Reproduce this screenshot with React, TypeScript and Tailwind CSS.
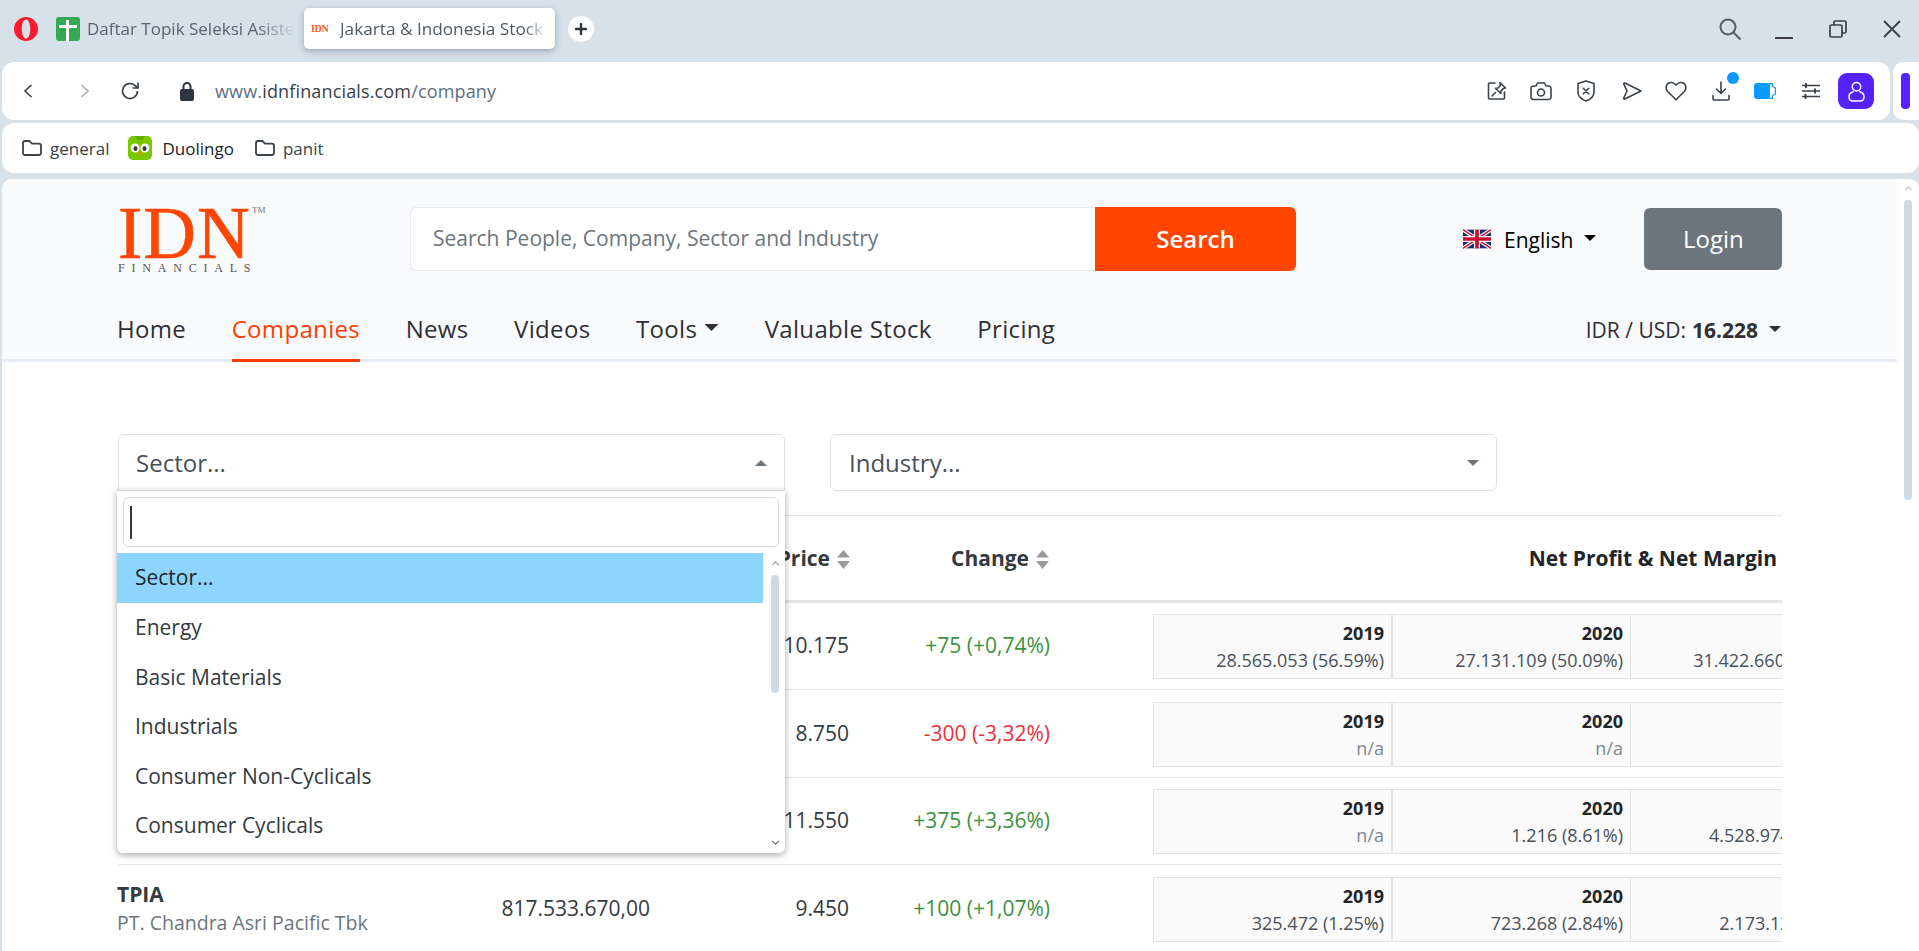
import React from "react";

const Caret = ({ className = "" }: { className?: string }) => (
  <svg viewBox="0 0 12 6" className={className} fill="currentColor"><path d="M0 0h12L6 6z" /></svg>
);

const Sort = () => (
  <svg viewBox="0 0 13 19" className="w-[13px] h-[19px] ml-[7px] shrink-0 text-[#9a9a9a]" fill="currentColor">
    <path d="M6.5 0 13 7.5H0z" /><path d="M0 11h13l-6.5 8z" />
  </svg>
);

const Folder = () => (
  <svg viewBox="0 0 20 16" className="w-[20px] h-[16px] shrink-0" fill="none" stroke="#3b4148" strokeWidth="1.8">
    <path d="M1 3.2C1 1.9 1.900 1 3.200 1h3.600c.7 0 1.200.3 1.600.8L10 3.600h6.800c1.300 0 2.200.9 2.200 2.200v7c0 1.300-.9 2.200-2.200 2.200H3.200C1.900 15 1 14.100 1 12.800z" strokeLinejoin="round" />
  </svg>
);

const Flag = () => (
  <svg viewBox="0 0 60 40" className="w-[28px] h-[20px] shrink-0">
    <rect width="60" height="40" fill="#1a2a6c" />
    <path d="M0 0 60 40M60 0 0 40" stroke="#fff" strokeWidth="8" />
    <path d="M0 0 60 40M60 0 0 40" stroke="#c8102e" strokeWidth="3" />
    <path d="M30 0v40M0 20h60" stroke="#fff" strokeWidth="13" />
    <path d="M30 0v40M0 20h60" stroke="#c8102e" strokeWidth="8" />
  </svg>
);

const tool = "fill-none stroke-[#3a424c] stroke-[1.6]";

const ToolIcons = () => (
  <div className="flex items-center">
    <svg viewBox="0 0 20 20" className={`w-[20px] h-[20px] ${tool}`} strokeLinecap="round" strokeLinejoin="round">
      <path d="M8 2H2.500A1 1 0 0 0 1.500 3v14a1 1 0 0 0 1 1h14a1 1 0 0 0 1-1v-6" />
      <path d="m13 1.500 5.500 5.500-2.200.6-2.300 2.400-.3 2.500-5.200-5.200 2.500-.3L13.300 4.700z" />
      <path d="m8.500 11.500-3.500 3.500" />
    </svg>
    <svg viewBox="0 0 22 20" className={`w-[22px] h-[20px] ml-[23px] ${tool}`} strokeLinejoin="round">
      <path d="M3.500 5H6l1.500-3h7L16 5h2.500A2.500 2.500 0 0 1 21 7.500v8.500a2.500 2.500 0 0 1-2.500 2.500h-15A2.500 2.500 0 0 1 1 16V7.500A2.500 2.500 0 0 1 3.500 5z" />
      <circle cx="11" cy="11.500" r="3.500" />
    </svg>
    <svg viewBox="0 0 18 22" className={`w-[18px] h-[22px] ml-[25px] ${tool}`} strokeLinejoin="round" strokeLinecap="round">
      <path d="M9 1 17 3.500V12c0 4.500-4 7.500-8 9-4-1.500-8-4.500-8-9V3.500z" />
      <path d="m6.300 8.300 5.400 5.400m0-5.400-5.400 5.400" />
    </svg>
    <svg viewBox="0 0 20 18" className={`w-[20px] h-[18px] ml-[27px] ${tool}`} strokeLinejoin="round" strokeLinecap="round">
      <path d="M2 1.200c.2-.3.5-.3.9-.2L19 9 2.800 17c-.7.3-1.300-.3-1-1L5 9 1.800 2.200c-.1-.4 0-.8.2-1z" />
    </svg>
    <svg viewBox="0 0 22 20" className={`w-[22px] h-[20px] ml-[23px] ${tool}`} strokeLinejoin="round">
      <path d="M11 18.700 2.700 10.500C.5 8.200.6 4.700 2.800 2.700c2.300-1.900 5.700-1.500 8.200 1.400 2.500-2.900 5.900-3.300 8.200-1.400 2.200 2 2.300 5.500.1 7.800z" />
    </svg>
    <div className="relative ml-[25px] w-[18px] h-[20px]">
      <svg viewBox="0 0 18 20" className={`w-[18px] h-[20px] ${tool}`} strokeLinecap="round" strokeLinejoin="round">
        <path d="M9 1v11M4.500 8 9 12.500 13.500 8M1 14.500V18a1 1 0 0 0 1 1h14a1 1 0 0 0 1-1v-3.500" />
      </svg>
      <span className="absolute left-[15px] top-[-9px] w-[12px] h-[12px] rounded-full bg-[#0a97ff]" />
    </div>
    <svg viewBox="0 0 22 16" className="w-[22px] h-[16px] ml-[24px]">
      <rect width="16" height="16" rx="3" fill="#0a9bff" />
      <path d="M15 .6h3.400v2.600l3 1.800v6l-3 1.800v2.600H15" fill="none" stroke="#0a9bff" strokeWidth="1.200" strokeLinejoin="round" />
    </svg>
    <svg viewBox="0 0 18 16" className={`w-[18px] h-[16px] ml-[26px] ${tool}`} strokeLinecap="round">
      <path d="M.5 2.500h17M.5 8h17M.5 13.500h17" />
      <path d="M4 .8v3.400M13 6.300v3.400M3.500 11.800v3.400" strokeWidth="2" />
    </svg>
    <div className="ml-[18px] w-[36px] h-[36px] rounded-[9px] bg-[#5522ff] flex items-center justify-center">
      <svg viewBox="0 0 18 22" className="w-[17px] h-[21px] fill-none stroke-white stroke-[1.500]">
        <circle cx="9" cy="6" r="4.500" />
        <path d="M6 11C2.500 12 1 14 1 16.500 1 19.500 3 21 5.500 21h7c2.500 0 4.500-1.500 4.500-4.500 0-2.500-1.500-4.500-5-5.500" />
      </svg>
    </div>
  </div>
);

type Cell = { year: string; value: string; na?: boolean };

const YearCell = ({ c, w, thick }: { c: Cell; w: string; thick?: boolean }) => (
  <div className={`h-[65px] shrink-0 ${w} bg-[#fafafa] border-y-[1px] border-y-[#e2e2e2] border-r-[#e2e2e2] ${thick ? "border-r-[2px]" : "border-r-[1px]"} pr-[7px] pb-[1px] flex flex-col items-end justify-center text-[18px] whitespace-nowrap`}>
    <span className="font-bold text-[#212529] leading-[27px]">{c.year}</span>
    <span className={c.na ? "text-[#7d8791] leading-[26px]" : "text-[#495057] leading-[26px]"}>{c.value}</span>
  </div>
);

const Cells = ({ cells }: { cells: Cell[] }) => (
  <div className="flex w-[629px] shrink-0 overflow-hidden">
    <div className="w-[1px] h-[65px] bg-[#e2e2e2] shrink-0" />
    <YearCell c={cells[0]} w="w-[239px]" thick />
    <YearCell c={cells[1]} w="w-[238px]" />
    <YearCell c={cells[2]} w="w-[238px]" />
  </div>
);

const rows = [
  { price: "10.175", change: "+75 (+0,74%)", tone: "text-[#3d9140]", h: "h-[87px] pt-[11px]", cells: [
    { year: "2019", value: "28.565.053 (56.59%)" }, { year: "2020", value: "27.131.109 (50.09%)" }, { year: "2021", value: "31.422.660 (52.27%)" } ] },
  { price: "8.750", change: "-300 (-3,32%)", tone: "text-[#e8323c]", h: "h-[88px] pt-[12px]", cells: [
    { year: "2019", value: "n/a", na: true }, { year: "2020", value: "n/a", na: true }, { year: "2021", value: "n/a", na: true } ] },
  { price: "11.550", change: "+375 (+3,36%)", tone: "text-[#3d9140]", h: "h-[87px] pt-[11px]", cells: [
    { year: "2019", value: "n/a", na: true }, { year: "2020", value: "1.216 (8.61%)" }, { year: "2021", value: "4.528.974 (8.61%)\u00a0" } ] },
  { price: "9.450", change: "+100 (+1,07%)", tone: "text-[#3d9140]", h: "h-[88px] pt-[12px]", cells: [
    { year: "2019", value: "325.472 (1.25%)" }, { year: "2020", value: "723.268 (2.84%)" }, { year: "2021", value: "2.173.123 (8.5%)\u00a0" } ], ticker: "TPIA", name: "PT. Chandra Asri Pacific Tbk", cap: "817.533.670,00" },
] as { price: string; change: string; tone: string; h: string; cells: Cell[]; ticker?: string; name?: string; cap?: string }[];

const options = ["Energy", "Basic Materials", "Industrials", "Consumer Non-Cyclicals", "Consumer Cyclicals"];

export default function App() {
  return (
    <div className="w-full h-[951px] overflow-hidden bg-[#d7e1ea] flex flex-col font-['Open_Sans',sans-serif]">
      {/* tab strip */}
      <div className="h-[62px] shrink-0 flex pt-[8px] pl-[14px] pr-[18px]">
        <svg viewBox="0 0 24 24" className="w-[24px] h-[24px] mt-[9px] shrink-0">
          <path fillRule="evenodd" fill="#ff1b2d" d="M12 0c6.600 0 12 5.400 12 12s-5.400 12-12 12S0 18.600 0 12 5.400 0 12 0zm0 2.500c-2.700 0-4.200 4.200-4.200 9.500s1.500 9.500 4.200 9.500 4.200-4.200 4.200-9.500S14.700 2.500 12 2.500z" />
        </svg>
        <div className="ml-[18px] mt-[9px] w-[24px] h-[24px] rounded-[3px] bg-[#34a853] relative shrink-0">
          <span className="absolute left-[10px] top-[3px] w-[3px] h-[21px] bg-white" />
          <span className="absolute left-[3px] top-[8px] w-[18px] h-[3px] bg-white" />
        </div>
        <div className="ml-[7px] w-[209px] mt-[7px] h-[28px] leading-[28px] text-[17px] text-[#5a646e] whitespace-nowrap overflow-hidden [mask-image:linear-gradient(to_right,black_82%,transparent)]">Daftar Topik Seleksi Asisten Laboratorium</div>
        <div className="ml-[8px] w-[251px] h-[41px] bg-white rounded-[5px] shadow-[0_2px_6px_rgba(70,90,110,0.45)] flex items-center pl-[7px] shrink-0">
          <span className="w-[22px] text-[10px] font-bold text-[#ff5a30] font-['Liberation_Serif',serif] tracking-[-0.3px] shrink-0">IDN</span>
          <span className="ml-[7px] w-[206px] text-[17.2px] text-[#4f5963] whitespace-nowrap overflow-hidden [mask-image:linear-gradient(to_right,black_90%,transparent)]">Jakarta &amp; Indonesia Stock Exchange</span>
        </div>
        <div className="ml-[13px] mt-[8px] w-[26px] h-[26px] rounded-full bg-white flex items-center justify-center shrink-0">
          <svg viewBox="0 0 12 12" className="w-[12px] h-[12px]"><path d="M6 1v10M1 6h10" stroke="#2c3540" strokeWidth="2.400" strokeLinecap="round" /></svg>
        </div>
        <div className="flex-1" />
        <svg viewBox="0 0 22 22" className="w-[22px] h-[22px] mt-[10px] fill-none stroke-[#555c63] stroke-[2]">
          <circle cx="9" cy="9" r="7.500" /><path d="m14.500 14.500 7 7" />
        </svg>
        <div className="ml-[34px] mt-[29px] w-[18px] h-[2px] bg-[#3b3f44]" />
        <svg viewBox="0 0 18 18" className="ml-[36px] mt-[12px] w-[18px] h-[18px] fill-none stroke-[#3b3f44] stroke-[1.700]">
          <rect x="1" y="5" width="12" height="12" rx="1.500" /><path d="M5 5V2.500C5 1.600 5.600 1 6.500 1h9C16.400 1 17 1.600 17 2.500v9c0 .9-.6 1.500-1.500 1.500H13" />
        </svg>
        <svg viewBox="0 0 18 18" className="ml-[36px] mt-[12px] w-[18px] h-[18px] fill-none stroke-[#3b3f44] stroke-[1.800]">
          <path d="m1 1 16 16M17 1 1 17" />
        </svg>
      </div>

      {/* address bar */}
      <div className="h-[58px] shrink-0 flex mb-[3px]">
        <div className="ml-[2px] w-[1888px] bg-white rounded-[12px] flex items-center pr-[16px]">
          <svg viewBox="0 0 10 14" className="ml-[21px] w-[10px] h-[14px] fill-none stroke-[#3a424c] stroke-[1.700]"><path d="M8.500 1 2 7l6.500 6" /></svg>
          <svg viewBox="0 0 10 14" className="ml-[47px] w-[10px] h-[14px] fill-none stroke-[#aab0b6] stroke-[1.700]"><path d="m1.500 1 6.500 6-6.500 6" /></svg>
          <svg viewBox="0 0 20 20" className="ml-[30px] w-[20px] h-[20px] fill-none stroke-[#3a424c] stroke-[1.700]">
            <path d="M17.500 10a7.500 7.500 0 1 1-2.300-5.400L18 7" /><path d="M18 1.500V7h-5.500" fill="none" />
          </svg>
          <svg viewBox="0 0 14 20" className="ml-[40px] w-[14px] h-[20px]">
            <path d="M3.500 9V5.500a3.500 3.500 0 0 1 7 0V9" fill="none" stroke="#2c3540" strokeWidth="2" />
            <rect x="0" y="8" width="14" height="12" rx="2" fill="#2c3540" />
          </svg>
          <div className="ml-[21px] text-[18px] tracking-[0.15px] text-[#5e6e80] whitespace-nowrap">www.<span className="text-[#3a424c]">idnfinancials.com</span>/company</div>
          <div className="flex-1" />
          <ToolIcons />
        </div>
        <div className="ml-[3px] flex-1 bg-white rounded-l-[10px] flex items-center pl-[8px]">
          <div className="w-[9px] h-[36px] rounded-[4px] bg-[#5522ff]" />
        </div>
      </div>

      {/* bookmarks */}
      <div className="h-[50px] shrink-0 ml-[2px] bg-white rounded-[12px] flex items-center pl-[20px] text-[17px] text-[#3a424c]">
        <Folder />
        <span className="ml-[8px] pt-[2px]">general</span>
        <svg viewBox="0 0 24 24" className="ml-[19px] w-[24px] h-[24px] shrink-0">
          <rect width="24" height="24" rx="5" fill="#78c800" />
          <path d="M3 0h4l2 4h6l2-4h4z" fill="#68b000" />
          <circle cx="7" cy="12" r="4.500" fill="#fff" /><circle cx="17" cy="12" r="4.500" fill="#fff" />
          <ellipse cx="7.500" cy="12.500" rx="2" ry="2.500" fill="#3c3c3c" /><ellipse cx="16.500" cy="12.500" rx="2" ry="2.500" fill="#3c3c3c" />
          <path d="M9.500 16.500h5L12 20z" fill="#f49000" />
        </svg>
        <span className="ml-[10px] pt-[2px] text-[#20232a]">Duolingo</span>
        <div className="ml-[21px]"><Folder /></div>
        <span className="ml-[8px] pt-[2px]">panit</span>
      </div>

      {/* web page */}
      <div className="mt-[6px] ml-[2px] flex-1 min-h-0 bg-white rounded-t-[10px] flex overflow-hidden">
        <div className="w-[1895px] shrink-0 text-[#343a40]">
          <header className="h-[183px] bg-[#f9fafc] border-b-[3px] border-[#e9edf5] px-[116px] flex flex-col">
            <div className="h-[70px] pt-[28px] flex">
              <div className="w-[292px] shrink-0 relative h-[68px]">
                <div className="absolute left-0 top-[1px] text-[#ff4500] text-[73px] leading-[52px] font-['Liberation_Serif',serif] tracking-[1px] [-webkit-text-stroke:0.6px_#ff4500]">IDN</div>
                <div className="absolute left-[134px] top-[-2px] text-[#777] text-[9px] leading-[10px] font-['Liberation_Serif',serif]">TM</div>
                <div className="absolute left-0 top-[55px] text-[#555] text-[12px] leading-[12px] font-['Liberation_Serif',serif] tracking-[6.800px] whitespace-nowrap">FINANCIALS</div>
              </div>
              <div className="w-[886px] h-[64px] flex shrink-0">
                <div className="flex-1 bg-white border border-[#e6e8ec] border-r-0 rounded-l-[6px] pl-[22px] flex items-center text-[21px] text-[#6c757d]">Search People, Company, Sector and Industry</div>
                <div className="w-[201px] bg-[#ff4500] rounded-r-[6px] flex items-center justify-center text-white text-[24px] font-semibold">Search</div>
              </div>
              <div className="flex-1 flex items-start">
                <div className="ml-[167px] h-[64px] flex items-center text-[21px] text-black">
                  <Flag />
                  <span className="ml-[13px] pt-[4px]">English</span>
                  <Caret className="w-[12px] h-[6px] ml-[11px] mb-[3px]" />
                </div>
                <div className="ml-[48px] mt-[1px] w-[138px] h-[62px] rounded-[6px] bg-[#6c757d] flex items-center justify-center text-white text-[24px]">Login</div>
              </div>
            </div>
            <nav className="flex-1 flex justify-between text-[#2f2f35] text-[24px] font-medium">
              <div className="flex gap-[45.5px] -ml-[1px] tracking-[0.33px]">
                {["Home", "Companies", "News", "Videos"].map((n) => (
                  <div key={n} className={n === "Companies" ? "h-[113px] text-[#ff3d00] border-b-[3px] border-[#ff3d00] pt-[63px] leading-[33px]" : "pt-[63px] leading-[33px]"}>{n}</div>
                ))}
                <div className="pt-[63px] leading-[33px] flex items-start">Tools<Caret className="w-[15px] h-[7px] ml-[7px] mt-[12px]" /></div>
                {["Valuable Stock", "Pricing"].map((n) => (
                  <div key={n} className="pt-[63px] leading-[33px]">{n}</div>
                ))}
              </div>
              <div className="pt-[66px] leading-[30px] text-[21px] tracking-normal font-normal flex items-start">
                <span>IDR / USD:</span><span className="ml-[6px] font-bold">16.228</span>
                <Caret className="w-[12px] h-[6px] ml-[11px] mt-[11px]" />
              </div>
            </nav>
          </header>

          <main className="px-[116px] pt-[72px]">
            <div className="relative flex gap-[45px]">
              <div className="w-[667px] h-[57px] border border-[#dee2e6] rounded-t-[6px] flex items-center justify-between pl-[17px] pr-[17px] text-[24px] text-[#495057]">
                <span>Sector...</span>
                <svg viewBox="0 0 12 6" className="w-[12px] h-[6px]" fill="#6c757d"><path d="M0 6h12L6 0z" /></svg>
              </div>
              <div className="w-[667px] h-[57px] border border-[#dee2e6] rounded-[6px] flex items-center justify-between pl-[18px] pr-[17px] text-[24px] text-[#495057]">
                <span>Industry...</span>
                <svg viewBox="0 0 12 6" className="w-[12px] h-[6px]" fill="#6c757d"><path d="M0 0h12L6 6z" /></svg>
              </div>

              {/* open dropdown */}
              <div className="absolute z-10 left-[-1px] top-[56px] w-[668px] h-[363px] bg-white border-t border-[#d5d8dc] rounded-b-[6px] shadow-[0_2px_7px_rgba(0,0,0,0.35)] flex flex-col text-[21px] text-[#343a40]">
                <div className="pl-[6px] pr-[6px] pt-[6px] pb-[6px]">
                  <div className="h-[50px] border border-[#d5d8dc] rounded-[6px] flex items-center pl-[6px]">
                    <div className="w-[2px] h-[33px] bg-[#343a40]" />
                  </div>
                </div>
                <div className="flex flex-1 min-h-0">
                  <div className="w-[646px]">
                    <div className="h-[50px] bg-[#8dd5ff] pl-[18px] flex items-center text-[#212529]">Sector...</div>
                    {options.map((o) => (
                      <div key={o} className="h-[49.5px] pl-[18px] flex items-center">{o}</div>
                    ))}
                  </div>
                  <div className="flex-1 relative">
                    <svg viewBox="0 0 10 6" className="absolute left-[8px] top-[8px] w-[9px] h-[5px] fill-none stroke-[#a0a5aa] stroke-[1.500]"><path d="m1 5 4-4 4 4" /></svg>
                    <div className="absolute left-[8px] top-[22px] w-[8px] h-[118px] rounded-[4px] bg-[#cfdae3]" />
                    <svg viewBox="0 0 10 6" className="absolute left-[8px] top-[287px] w-[9px] h-[5px] fill-none stroke-[#6c757d] stroke-[1.500]"><path d="m1 1 4 4 4-4" /></svg>
                  </div>
                </div>
              </div>
            </div>

            {/* table */}
            <div className="w-[1664px] mt-[24px] border-t border-[#e3e5e8]">
              <div className="h-[87px] pt-[2px] flex items-center border-b-[3px] border-[#e3e5e8] text-[21px] font-bold text-[#343a40]">
                <div className="w-[732px] shrink-0 flex items-center justify-end">Price<Sort /></div>
                <div className="w-[199px] shrink-0 flex items-center justify-end">Change<Sort /></div>
                <div className="flex-1 text-right pr-[5px] text-[#212529]">Net Profit &amp; Net Margin</div>
              </div>
              {rows.map((r, i) => (
                <div key={i} className={`${r.h} flex ${i < 3 ? "border-b border-[#e3e5e8]" : ""}`}>
                  <div className="w-[385px] shrink-0 h-[65px] pb-[2px] -ml-[1px] mr-[1px] flex flex-col justify-center">
                    {r.ticker && <span className="text-[21px] font-bold leading-[29px] text-[#343a40]">{r.ticker}</span>}
                    {r.name && <span className="text-[19.5px] leading-[28px] text-[#6c757d] whitespace-nowrap">{r.name}</span>}
                  </div>
                  <div className="w-[147px] shrink-0 h-[65px] pb-[2px] flex items-center justify-end text-[21px] whitespace-nowrap">{r.cap}</div>
                  <div className="w-[199px] shrink-0 h-[65px] pb-[2px] flex items-center justify-end text-[21px]">{r.price}</div>
                  <div className="w-[201px] shrink-0 h-[65px] pb-[2px] flex items-center justify-end text-[21px] whitespace-nowrap"><span className={r.tone}>{r.change}</span></div>
                  <div className="w-[103px] shrink-0" />
                  <Cells cells={r.cells} />
                </div>
              ))}
            </div>
          </main>
        </div>

        {/* page scrollbar */}
        <div className="flex-1 relative bg-white">
          <svg viewBox="0 0 10 6" className="absolute left-[7px] top-[7px] w-[9px] h-[5px] fill-none stroke-[#c2c8ce] stroke-[1.500]"><path d="m1 5 4-4 4 4" /></svg>
          <div className="absolute left-[7px] top-[21px] w-[8px] h-[300px] rounded-[4px] bg-[#cfdae3]" />
        </div>
      </div>
    </div>
  );
}
